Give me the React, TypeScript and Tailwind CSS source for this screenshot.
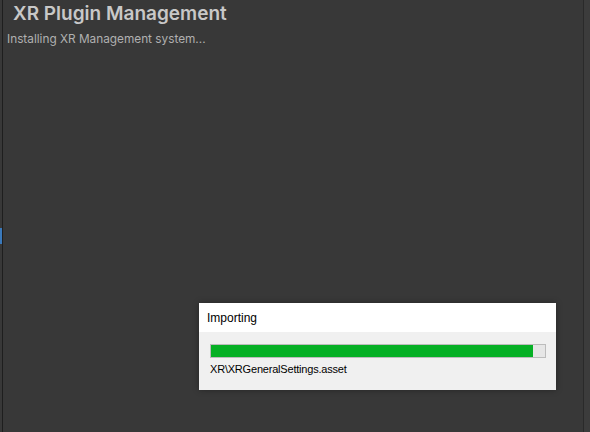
import React from 'react';

export default function App() {
  return (
    <div className="relative flex h-[432px] w-[590px] overflow-hidden bg-[#383838]" style={{ fontFamily: 'Inter, "Noto Sans", sans-serif' }}>
      {/* left edge */}
      <div className="flex w-[2px] flex-col bg-[#383838]">
        <div className="h-[228px]" />
        <div className="h-[16px] bg-[#3a79bb]" />
      </div>
      <div className="w-px bg-[#1e1e1e]" />

      {/* main pane */}
      <main className="flex flex-1 flex-col">
        <h1 className="pl-[10px] pt-[1px] text-[19px] font-semibold leading-[26px] text-[#c8c8c8]">XR Plugin Management</h1>
        <p className="pl-[4px] pt-[4px] text-[11.8px] leading-[16px] text-[#b0b0b0]">Installing XR Management system...</p>
      </main>

      {/* right edge */}
      <div className="w-px bg-[#2a2a2a]" />
      <div className="w-[6px] bg-[#3c3c3c]" />

      {/* import dialog */}
      <div
        className="absolute left-[199px] top-[303px] w-[357px] shadow-[0_0_6px_rgba(0,0,0,0.35)]"
        style={{ fontFamily: '"Liberation Sans", Arial, sans-serif' }}
      >
        <div className="flex h-[29px] items-center bg-white pl-[8px] text-[12px] text-black">Importing</div>
        <div className="flex h-[58px] flex-col bg-[#f0f0f0] px-[11px] pt-[12px]">
          <div className="h-[14px] w-[336px] border border-[#bcbcbc] bg-[#e6e6e6]">
            <div className="h-full w-[322px] bg-[#06b025]" />
          </div>
          <div className="pt-[4px] text-[11px] leading-[15px] tracking-[-0.2px] text-black">XR\XRGeneralSettings.asset</div>
        </div>
      </div>
    </div>
  );
}
